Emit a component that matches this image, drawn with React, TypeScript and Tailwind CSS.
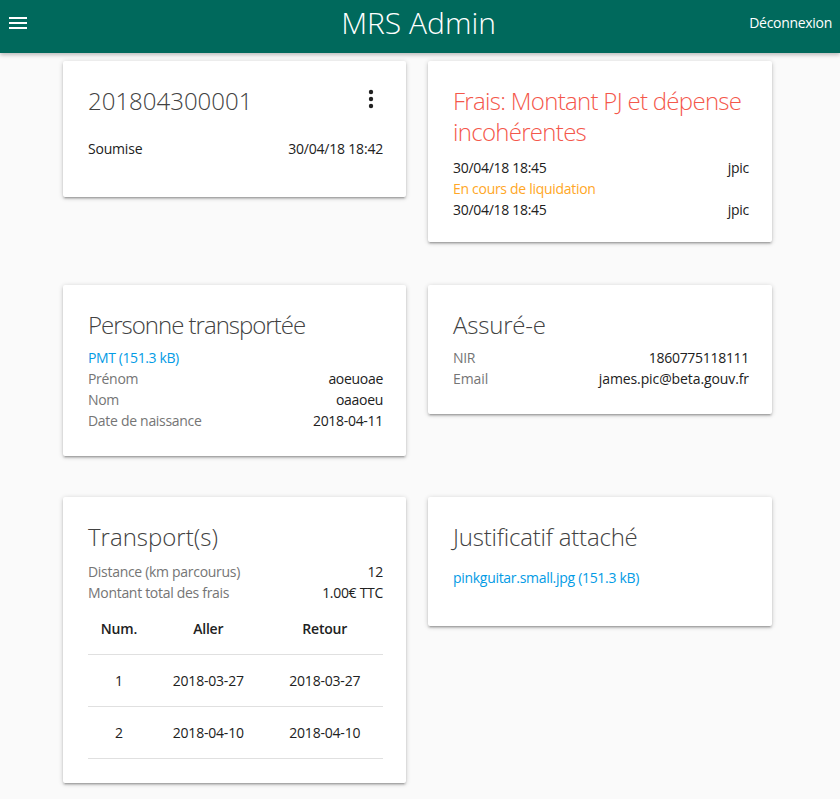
const font = { fontFamily: '"Open Sans", "Noto Sans", sans-serif' }

function Card({ children, className = '' }: { children: React.ReactNode; className?: string }) {
  return (
    <div className={`bg-white rounded-[2px] shadow-[0_2px_2px_0_rgba(0,0,0,0.14),0_3px_1px_-2px_rgba(0,0,0,0.12),0_1px_5px_0_rgba(0,0,0,0.2)] pl-[25px] pr-[23px] pt-[24px] ${className}`}>
      {children}
    </div>
  )
}

function Title({ children, className = '' }: { children: React.ReactNode; className?: string }) {
  return <h2 className={`text-[24px] font-light leading-[31px] ${className}`}>{children}</h2>
}

function Row({ label, value }: { label: string; value: string }) {
  return (
    <div className="flex justify-between text-[14px] leading-[21px] tracking-[-0.3px]">
      <span className="text-[#757575]">{label}</span>
      <span className="text-[#212121]">{value}</span>
    </div>
  )
}

const trips = [
  { num: 1, aller: '2018-03-27', retour: '2018-03-27' },
  { num: 2, aller: '2018-04-10', retour: '2018-04-10' },
]

export default function App() {
  return (
    <div className="min-h-screen bg-[#fafafa] pb-4" style={font}>
      {/* Toolbar */}
      <header className="h-[53px] bg-[#00695c] text-white grid grid-cols-[1fr_auto_1fr] items-center px-[9px] shadow-[0_2px_4px_rgba(0,0,0,0.25)] relative">
        <div className="flex flex-col gap-[3px] w-[18px] -mt-[8px]">
          <span className="h-[2px] bg-white" />
          <span className="h-[2px] bg-white" />
          <span className="h-[2px] bg-white" />
        </div>
        <h1 className="text-center text-[30px] font-light leading-none -mt-[8px] ml-[-3px]">MRS Admin</h1>
        <span className="justify-self-end text-[14px] tracking-[-0.3px] -mt-[8px] mr-[-1px]">Déconnexion</span>
      </header>

      <main className="grid grid-cols-[343px_344px] gap-x-[22px] gap-y-[41px] items-start ml-[63px] mt-[8px]">
        {/* Request number */}
        <Card className="pb-[38px]">
          <div className="flex items-start justify-between">
            <Title className="text-[#424242]">201804300001</Title>
            <svg width="6" height="22" viewBox="0 0 6 22" className="mt-[4px] mr-[9px] fill-[#212121]">
              <circle cx="3" cy="3" r="2.2" />
              <circle cx="3" cy="10" r="2.2" />
              <circle cx="3" cy="17" r="2.2" />
            </svg>
          </div>
          <div className="flex justify-between text-[14px] leading-[21px] text-[#212121] mt-[22px] tracking-[-0.2px]">
            <span>Soumise</span>
            <span>30/04/18 18:42</span>
          </div>
        </Card>

        {/* Status */}
        <Card className="pb-[22px] mb-[2px]">
          <Title className="text-[#f4574b] tracking-[-0.7px]">Frais: Montant PJ et dépense incohérentes</Title>
          <div className="text-[14px] leading-[21px] text-[#212121] mt-[10px] tracking-[-0.3px]">
            <div className="flex justify-between"><span>30/04/18 18:45</span><span>jpic</span></div>
            <div className="text-[#ffa726]">En cours de liquidation</div>
            <div className="flex justify-between"><span>30/04/18 18:45</span><span>jpic</span></div>
          </div>
        </Card>

        {/* Patient */}
        <Card className="pb-[25px]">
          <Title className="text-[#424242] tracking-[-1px] mb-[7px]">Personne transportée</Title>
          <a className="block text-[14px] leading-[21px] text-[#039be5] tracking-[-0.4px]">PMT (151.3 kB)</a>
          <Row label="Prénom" value="aoeuoae" />
          <Row label="Nom" value="oaaoeu" />
          <Row label="Date de naissance" value="2018-04-11" />
        </Card>

        {/* Insured */}
        <Card className="pb-[25px]">
          <Title className="text-[#424242] tracking-[-0.2px] mb-[7px]">Assuré-e</Title>
          <Row label="NIR" value="1860775118111" />
          <div className="flex justify-between text-[14px] leading-[21px] tracking-[-0.1px]">
            <span className="text-[#757575]">Email</span>
            <span className="text-[#212121]">james.pic@beta.gouv.fr</span>
          </div>
        </Card>

        {/* Transports */}
        <Card className="pb-[24px]">
          <Title className="text-[#424242] mb-[9px]">Transport(s)</Title>
          <Row label="Distance (km parcourus)" value="12" />
          <Row label="Montant total des frais" value="1.00€ TTC" />
          <table className="w-full mt-[15px] text-[14px] text-[#212121] border-collapse tracking-[-0.2px]">
            <thead>
              <tr className="border-b border-[#e0e0e0]">
                <th className="h-[36px] font-semibold align-top leading-[21px] p-0 w-[62px]">Num.</th>
                <th className="h-[36px] font-semibold align-top leading-[21px] p-0">Aller</th>
                <th className="h-[36px] font-semibold align-top leading-[21px] p-0">Retour</th>
              </tr>
            </thead>
            <tbody>
              {trips.map(t => (
                <tr key={t.num} className="border-b border-[#e0e0e0]">
                  <td className="h-[52px] text-center p-0">{t.num}</td>
                  <td className="h-[52px] text-center p-0">{t.aller}</td>
                  <td className="h-[52px] text-center p-0">{t.retour}</td>
                </tr>
              ))}
            </tbody>
          </table>
        </Card>

        {/* Attachment */}
        <Card className="pb-[25px]">
          <Title className="text-[#424242] tracking-[-0.2px]">Justificatif attaché</Title>
          <a className="block text-[14px] leading-[21px] text-[#039be5] tracking-[-0.3px] mt-[15px] pb-[13px]">pinkguitar.small.jpg (151.3 kB)</a>
        </Card>
      </main>
    </div>
  )
}
